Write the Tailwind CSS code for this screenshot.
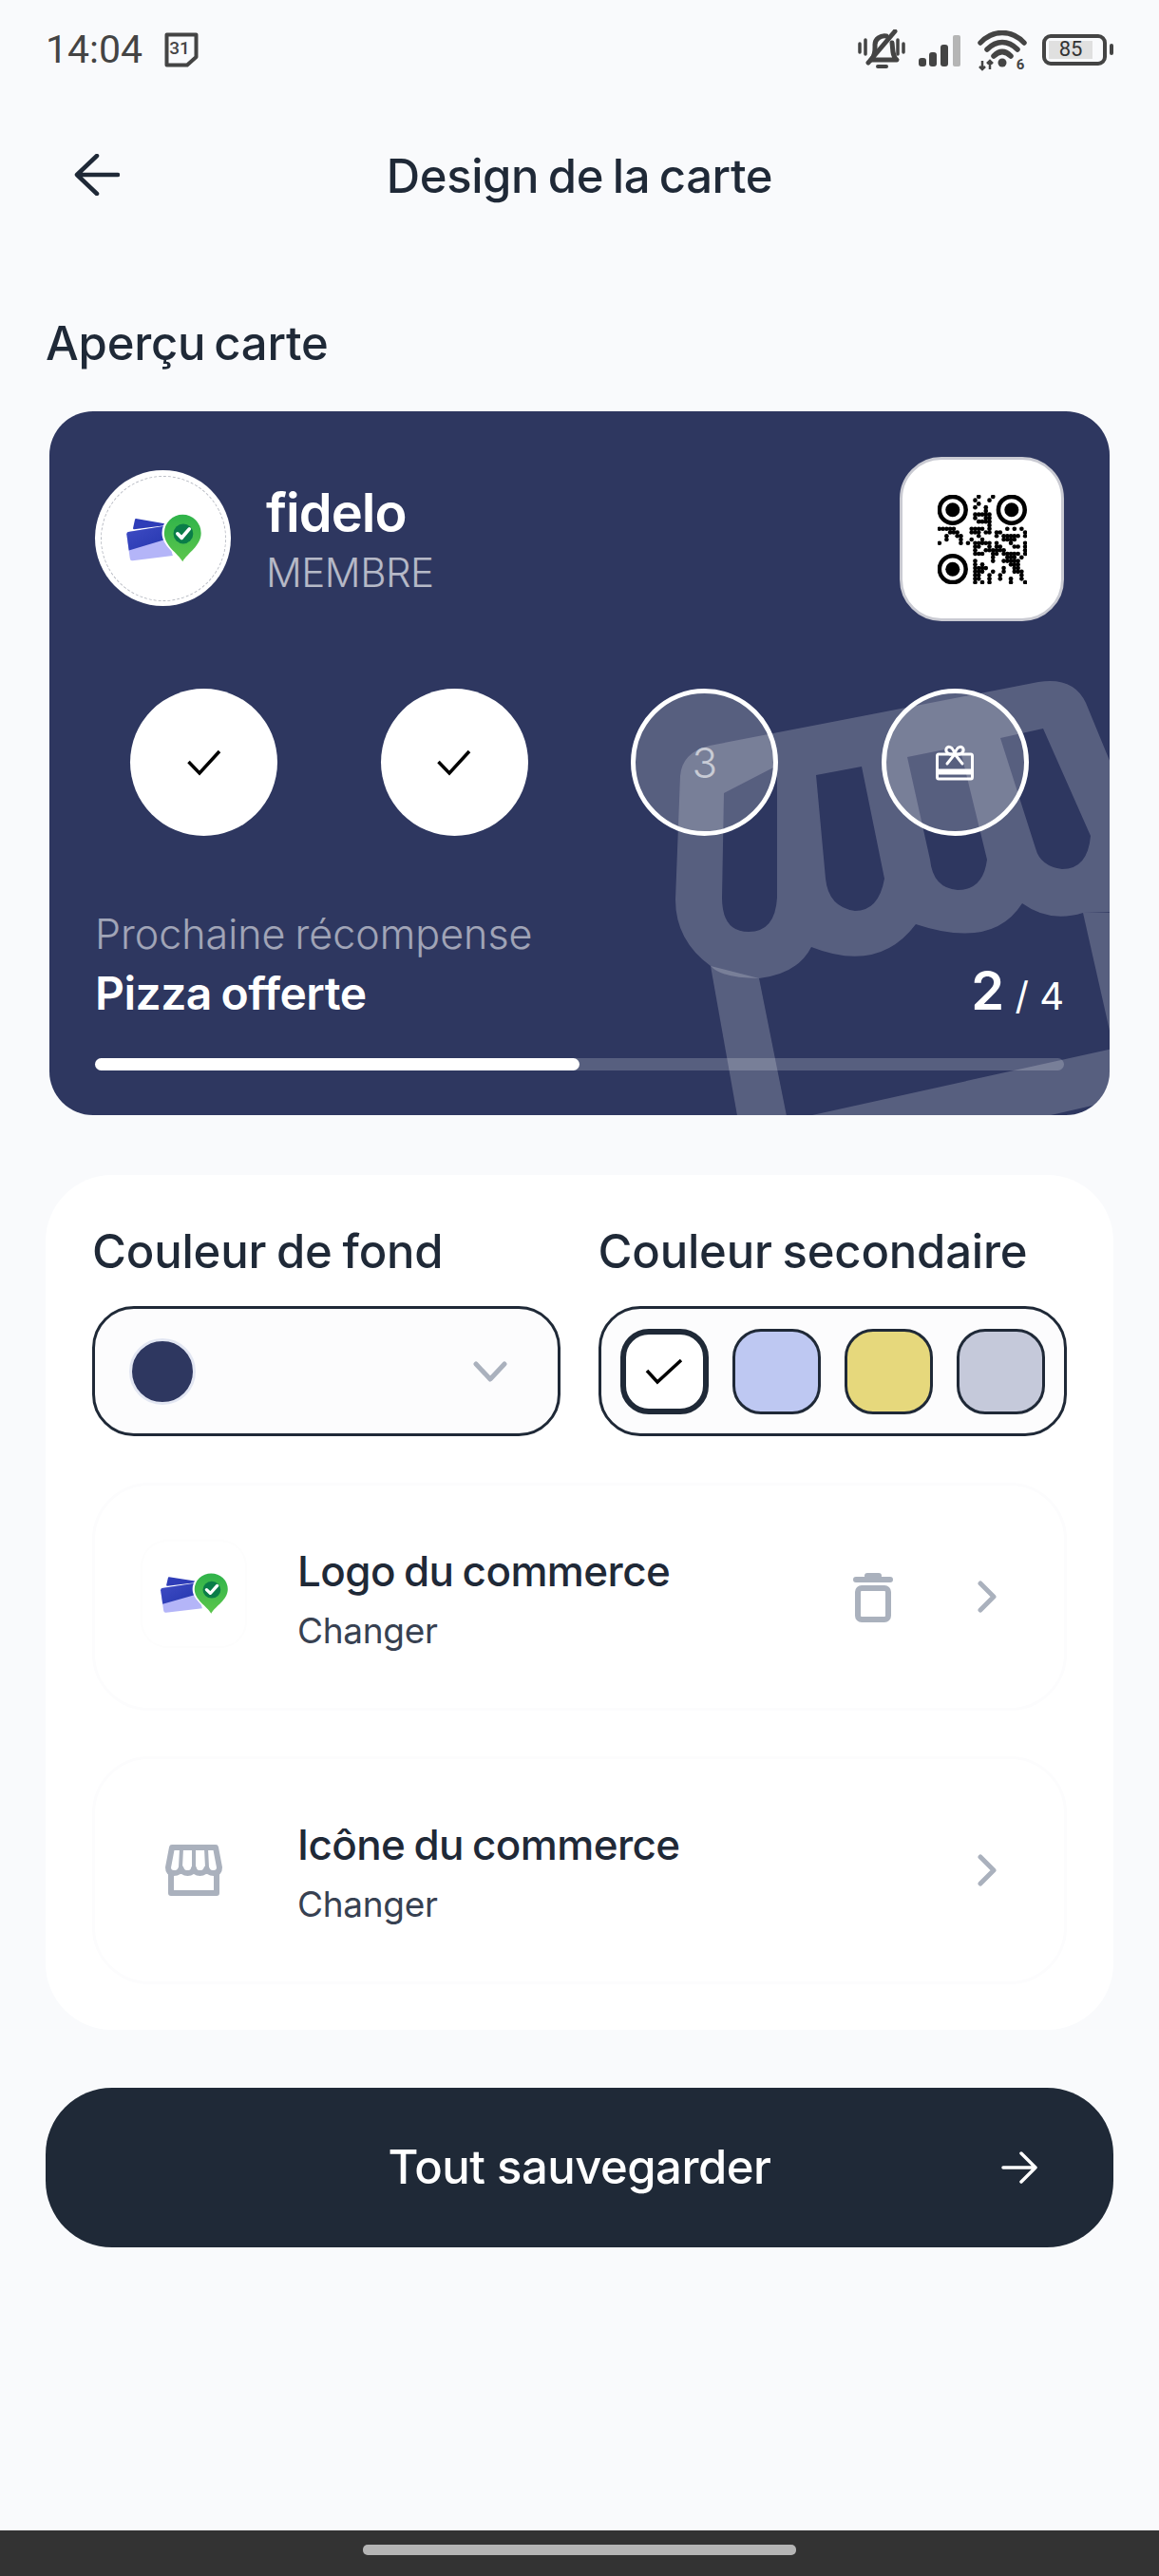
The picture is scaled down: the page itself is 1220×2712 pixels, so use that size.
<!DOCTYPE html>
<html lang="fr">
<head>
<meta charset="UTF-8">
<meta name="viewport" content="width=device-width, initial-scale=1.0">
<title>Design de la carte</title>
<script src="https://cdn.jsdelivr.net/npm/@tailwindcss/browser@4"></script>
</head>
<body class="w-[1220px] h-[2712px] bg-[#f9fafc] flex flex-col font-['Inter',sans-serif] text-[#1f2937] overflow-hidden">

<!-- shared logo -->
<svg width="0" height="0" class="absolute">
  <defs>
    <linearGradient id="pinGreen" x1="0" y1="0" x2="0" y2="1"><stop offset="0" stop-color="#2fb34a"/><stop offset="1" stop-color="#5cc64c"/></linearGradient>
    <linearGradient id="cardBlue" x1="0" y1="0" x2="1" y2="1"><stop offset="0" stop-color="#3f4cc4"/><stop offset="1" stop-color="#2436ae"/></linearGradient>
    <symbol id="logo" viewBox="120 145 245 160" preserveAspectRatio="none">
      <path d="M156 166 L246 181 L150 193 Z" fill="#2f3db8" stroke="#2f3db8" stroke-width="6" stroke-linejoin="round"/>
      <path d="M132 204 L246 186 L272 278 L146 294 Q138 295 137 286 L127 212 Q127 205 132 204 Z" fill="#b4b5f8"/>
      <path d="M132 204 L246 186 L256 226 L134 262 L127 212 Q127 205 132 204 Z" fill="url(#cardBlue)"/>
      <path d="M303 304 C285 272 238 250 238 208 A65 65 0 0 1 368 208 C368 250 321 272 303 304 Z" fill="#fff"/>
      <path d="M303 297 C288 270 245 248 245 208 A58 58 0 0 1 361 208 C361 248 318 270 303 297 Z" fill="url(#pinGreen)"/>
      <circle cx="305" cy="210" r="31" fill="#0a7d48"/>
      <path d="M287 210 L300 223 L324 195" fill="none" stroke="#fff" stroke-width="11" stroke-linecap="round" stroke-linejoin="round"/>
    </symbol>
  </defs>
</svg>

<!-- status bar -->
<div class="h-[104px] pl-[48px] pr-[48px] flex items-center justify-between text-[#444]">
  <div class="flex items-center gap-[23px]">
    <span class="font-['Roboto',sans-serif] text-[41px] leading-none">14:04</span>
    <svg width="36" height="37" viewBox="0 0 36 37">
      <path d="M2.500 2.500 H33.500 V26 L24 34.500 H2.500 Z" fill="none" stroke="#444" stroke-width="4" stroke-linejoin="round"/>
      <text x="16" y="23" text-anchor="middle" font-family="Roboto" font-size="19" font-weight="500" fill="#444">31</text>
    </svg>
  </div>
  <div class="flex items-center">
    <svg width="50" height="42" viewBox="0 0 50 42" class="mr-[14px]" fill="none" stroke="#444" stroke-linecap="round" stroke-linejoin="round">
      <path d="M2 15 V24 M8 11 V26 M42 11 V26 M48 15 V24" stroke-width="3.500"/>
      <path d="M14 32 C19 27 18 20 18 16 C18 10 24 6 30 7 M36 14 C37 21 36 28 41 32 H14" stroke-width="5"/>
      <path d="M11 35 L39 2" stroke-width="5"/>
      <path d="M21 39 H30" stroke-width="4"/>
    </svg>
    <svg width="48" height="34" viewBox="0 0 48 34" class="mr-[14px] mt-[4px]">
      <rect x="0" y="24" width="8" height="9" rx="3" fill="#444"/>
      <rect x="11" y="18" width="8" height="15" rx="3" fill="#444"/>
      <rect x="23" y="10" width="8" height="23" rx="3" fill="#444"/>
      <rect x="36" y="0" width="8" height="33" rx="2" fill="#b5b5b5"/>
    </svg>
    <svg width="52" height="44" viewBox="0 0 52 44" class="mr-[16px] mt-[3px]" fill="none" stroke="#444">
      <path d="M3 13 C16 -1 36 -1 49 13" stroke-width="5.500" stroke-linecap="round"/>
      <path d="M10 20 C20 10 32 10 42 20" stroke-width="5.500" stroke-linecap="round"/>
      <path d="M17 27 C23 21 29 21 35 27" stroke-width="5.500" stroke-linecap="round"/>
      <circle cx="26" cy="34" r="4.500" fill="#444" stroke="none"/>
      <path d="M5 32 V41 M2 38 L5 41 L8 38 M13 41 V32 M10 35 L13 32 L16 35" stroke-width="2.500"/>
      <text x="45" y="41" text-anchor="middle" font-family="Roboto" font-size="15" font-weight="700" fill="#444" stroke="none">6</text>
    </svg>
    <div class="w-[68px] h-[33px] rounded-[9px] border-[4px] border-[#444] p-[3px] flex">
      <div class="w-[46px] h-full bg-[#e0e0e0] flex items-center justify-center font-['Roboto',sans-serif] text-[22px] leading-none text-[#333]">85</div>
    </div>
    <div class="w-[4px] h-[12px] rounded-full bg-[#444] ml-[3px]"></div>
  </div>
</div>

<!-- header -->
<div class="h-[164px] px-[78px] flex items-center">
  <svg width="48" height="44" viewBox="0 0 48 44" fill="none" stroke="#1f2937" stroke-width="4.500" stroke-linecap="round" stroke-linejoin="round" class="-mt-[4px]">
    <path d="M24 2 L3 22 L24 42 M3 22 H46"/>
  </svg>
  <h1 class="flex-1 text-center text-[49px] leading-[56px] font-medium tracking-[-0.4px] [word-spacing:-3px]">Design de la carte</h1>
  <div class="w-[48px]"></div>
</div>

<div class="h-[60px] mt-[64px] mb-[41px] pl-[48px] text-[49px] leading-[60px] font-medium tracking-[-0.2px] [word-spacing:-4px]">Aperçu carte</div>

<!-- card preview -->
<div class="relative ml-[52px] w-[1116px] h-[741px] rounded-[46px] overflow-hidden bg-[#2e3760] shrink-0">
  <svg class="absolute inset-0" width="1116" height="741" viewBox="52 433 1116 741">
    <path fill="#fff" fill-opacity="0.2" fill-rule="evenodd" d="M747 785 L1093 718 Q1130 712 1143 740 L1180 830 L1180 960 L1140 961 Q1105 972 1076 951 Q1045 1000 964 973 Q925 1025 854 997 Q840 1025 799 1030 Q760 1030 748 1017 Q711 990 711 947 L716 817 Q718 792 747 785 Z
      M762 835 L818 806 L818 945 Q816 981 788 981 Q760 981 760 945 Z
      M859 816 L907 807 L931 925 Q925 959 900 959 Q872 955 869 925 Z
      M955 797 L1010 786 L1039 905 Q1035 937 1008 937 Q982 935 979 905 Z
      M1053 777 L1098 767 L1148 880 Q1145 915 1118 915 Q1095 912 1090 893 Z"/>
    <path fill="#fff" fill-opacity="0.2" d="M748 1017 L777 1180 L829 1180 L799 1030 Z"/>
    <path fill="#fff" fill-opacity="0.2" d="M828 1180 L1180 1102 L1180 1157 L1080 1180 Z"/>
    <path fill="#fff" fill-opacity="0.2" d="M1140 961 L1180 961 L1180 1085 L1168 1085 Z"/>
  </svg>

  <div class="relative px-[48px] pt-[48px]">
    <div class="flex items-start justify-between">
      <div class="flex items-start">
        <div class="mt-[14px] w-[143px] h-[143px] rounded-full bg-white flex items-center justify-center">
          <div class="w-[132px] h-[132px] rounded-full border border-dashed border-[#b9bcc4] flex items-center justify-center">
            <svg width="82" height="54"><use href="#logo"/></svg>
          </div>
        </div>
        <div class="ml-[37px] mt-[25px]">
          <div class="text-white text-[56px] leading-[68px] font-semibold tracking-[-1px]">fidelo</div>
          <div class="text-white/65 text-[42px] leading-[52px] font-light tracking-[-0.5px] mt-[3px]">MEMBRE</div>
        </div>
      </div>
      <div class="w-[173px] h-[173px] rounded-[44px] bg-white border-[3px] border-[#c9cad2] flex items-center justify-center">
        <svg id="qr" width="94" height="94" viewBox="0 0 25 25" fill="#000"></svg>
      </div>
    </div>

    <div class="flex justify-between px-[37px] mt-[71px]">
      <div class="w-[155px] h-[155px] rounded-full bg-white flex items-center justify-center">
        <svg width="36" height="28" viewBox="0 0 36 28" fill="none" stroke="#000" stroke-width="3.500"><path d="M1.500 13 L13 25 L34 2"/></svg>
      </div>
      <div class="w-[155px] h-[155px] rounded-full bg-white flex items-center justify-center">
        <svg width="36" height="28" viewBox="0 0 36 28" fill="none" stroke="#000" stroke-width="3.500"><path d="M1.500 13 L13 25 L34 2"/></svg>
      </div>
      <div class="w-[155px] h-[155px] rounded-full bg-white/20 border-[5px] border-white flex items-center justify-center text-white/60 text-[44px] font-light">3</div>
      <div class="w-[155px] h-[155px] rounded-full bg-white/20 border-[5px] border-white flex items-center justify-center">
        <svg width="40" height="38" viewBox="0 0 40 38" fill="none" stroke="#fff" stroke-width="3" stroke-linejoin="round">
          <path d="M3 10 H37 Q38.500 10 38.500 12 V34 Q38.500 36 37 36 H3 Q1.500 36 1.500 34 V12 Q1.500 10 3 10 Z"/>
          <path d="M1.500 27 H38.500 M1.500 30 H38.500"/>
          <path d="M20 10 L12 20 M20 10 L28 20" stroke-linecap="round"/>
          <path d="M20 10 C14 11 10 8 11 4.500 C12 1 18 1 20 10 C22 1 28 1 29 4.500 C30 8 26 11 20 10 Z"/>
        </svg>
      </div>
    </div>

    <div class="mt-[79px] text-white/55 text-[43px] leading-[48px] font-light [word-spacing:-2px]">Prochaine récompense</div>
    <div class="mt-[6px] flex items-baseline justify-between h-[63px]">
      <span class="text-white text-[48px] leading-[60px] font-semibold tracking-[-0.5px] [word-spacing:-2px]">Pizza offerte</span>
      <span class="text-white text-[40px] leading-[60px] -mb-[3px]"><span class="text-[56px] font-semibold">2</span> / 4</span>
    </div>
    <div class="mt-[38px] h-[13px] rounded-full bg-white/20">
      <div class="w-1/2 h-full rounded-full bg-white"></div>
    </div>
  </div>
</div>

<!-- settings panel -->
<div class="ml-[48px] mt-[63px] w-[1124px] h-[900px] rounded-[70px] bg-white px-[49px] pt-[51px] shrink-0">
  <div class="flex gap-[40px]">
    <div class="w-[493px]">
      <div class="text-[49px] leading-[60px] font-medium tracking-[-0.2px] [word-spacing:-2px]">Couleur de fond</div>
      <div class="mt-[27px] h-[137px] rounded-[44px] border-[3px] border-[#1f2937] bg-[#fcfcfd] flex items-center justify-between pl-[36px] pr-[53px]">
        <div class="w-[70px] h-[70px] rounded-full bg-[#2e3760] border-[3px] border-[#e2e6f2]"></div>
        <svg width="36" height="22" viewBox="0 0 36 22" fill="none" stroke="#aab1bd" stroke-width="5" stroke-linecap="round" stroke-linejoin="round"><path d="M3 3 L18 19 L33 3"/></svg>
      </div>
    </div>
    <div class="w-[494px]">
      <div class="text-[49px] leading-[60px] font-medium tracking-[-0.2px] [word-spacing:-2px]">Couleur secondaire</div>
      <div class="mt-[27px] h-[137px] rounded-[44px] border-[3px] border-[#1f2937] bg-[#fcfcfd] flex items-center justify-between px-[20px]">
        <div class="w-[93px] h-[90px] rounded-[30px] border-[6px] border-[#1f2937] bg-white flex items-center justify-center">
          <svg width="40" height="28" viewBox="0 0 40 28" fill="none" stroke="#000" stroke-width="3.500"><path d="M2 13 L13 25 L38 2"/></svg>
        </div>
        <div class="w-[93px] h-[90px] rounded-[30px] border-[3px] border-[#1f2937] bg-[#bec8f2]"></div>
        <div class="w-[93px] h-[90px] rounded-[30px] border-[3px] border-[#1f2937] bg-[#e6d87c]"></div>
        <div class="w-[93px] h-[90px] rounded-[30px] border-[3px] border-[#1f2937] bg-[#c5c9da]"></div>
      </div>
    </div>
  </div>

  <div class="mt-[49px] h-[240px] rounded-[60px] border-[3px] border-[#fcfcfd] bg-white flex items-center pl-[48px] pr-[71px]">
    <div class="w-[112px] h-[114px] rounded-[28px] bg-white border-[2px] border-[#fdfdfd] flex items-center justify-center -mt-[6px]">
      <svg width="74" height="46"><use href="#logo"/></svg>
    </div>
    <div class="ml-[53px] pt-[6px]">
      <div class="text-[44px] leading-[54px] font-medium tracking-[-0.6px] [word-spacing:-2px]">Logo du commerce</div>
      <div class="mt-[12px] text-[37px] leading-[48px] text-[#374151] tracking-[-0.3px]">Changer</div>
    </div>
    <div class="ml-auto flex items-center gap-[89px]">
      <svg width="42" height="54" viewBox="0 0 42 54" fill="none" stroke="#aab1bd" stroke-width="6" stroke-linecap="round" stroke-linejoin="round">
        <path d="M3 9 H39 M15 5 H27"/>
        <rect x="5" y="18" width="32" height="33" rx="4"/>
      </svg>
      <svg width="20" height="34" viewBox="0 0 20 34" fill="none" stroke="#aab1bd" stroke-width="5" stroke-linecap="round" stroke-linejoin="round"><path d="M3 3 L17 17 L3 31"/></svg>
    </div>
  </div>

  <div class="mt-[48px] h-[240px] rounded-[60px] border-[3px] border-[#fcfcfd] bg-white flex items-center pl-[48px] pr-[71px]">
    <div class="w-[112px] h-[114px] flex items-center justify-center">
      <svg width="60" height="54" viewBox="0 0 60 54" fill="none" stroke="#aab1bd" stroke-width="6" stroke-linecap="round" stroke-linejoin="round">
        <path d="M7 3 H53 L57 24 Q57 30 51 30 Q45 30 43.500 25 Q42 30 36.500 30 Q31 30 30 25 Q29 30 23.500 30 Q18 30 16.500 25 Q15 30 9 30 Q3 30 3 24 Z"/>
        <path d="M17 4 L16 24 M30 4 V24 M43 4 L44 24" stroke-width="4"/>
        <path d="M6 30 V51 H54 V30"/>
      </svg>
    </div>
    <div class="ml-[53px] pt-[6px]">
      <div class="text-[44px] leading-[54px] font-medium tracking-[-0.6px] [word-spacing:-2px]">Icône du commerce</div>
      <div class="mt-[12px] text-[37px] leading-[48px] text-[#374151] tracking-[-0.3px]">Changer</div>
    </div>
    <svg width="20" height="34" viewBox="0 0 20 34" fill="none" stroke="#aab1bd" stroke-width="5" stroke-linecap="round" stroke-linejoin="round" class="ml-auto"><path d="M3 3 L17 17 L3 31"/></svg>
  </div>
</div>

<!-- save -->
<button class="mx-[48px] mt-[61px] h-[168px] rounded-[70px] bg-[#1f2937] text-white flex items-center px-[80px] shrink-0">
  <span class="w-[38px]"></span>
  <span class="flex-1 text-center text-[49px] font-medium tracking-[-0.5px]">Tout sauvegarder</span>
  <svg width="38" height="34" viewBox="0 0 38 34" fill="none" stroke="#fff" stroke-width="3.500" stroke-linecap="round" stroke-linejoin="round"><path d="M2 17 H36 M21 2 L36 17 L21 32"/></svg>
</button>

<!-- android nav -->
<div class="mt-auto h-[48px] bg-[#333] flex items-center justify-center shrink-0">
  <div class="w-[456px] h-[11px] rounded-[5px] bg-[#b5b5b5] -mt-[7px]"></div>
</div>

<script>
  // qr modules, finder patterns are drawn apart
  const rows = [
    "...........#...#.........",
    "..........#...#..........",
    "...........#.............",
    "..........#..#...........",
    ".............#...........",
    "..........#####..........",
    "..........#..##..........",
    "...........####..........",
    "..............#..........",
    "#####....####.#....#.#.#.",
    "...###...###.##.##......#",
    "..#..##....#....#.#####.#",
    "..#...#..#..#.....####...",
    "#.....#.#.#####.#...#...#",
    "..........##..#.##...##.#",
    "..........#..######.....#",
    "..........###..##.#####.#",
    "...............#...###.#.",
    "..........#....#..#####..",
    "..........#.#.......###..",
    "..........####....#..##..",
    "..........###..#..#..###.",
    "..........##..#..#.....#.",
    "..........##..#..#..#..#.",
    "..........#.#.#.....#...#"
  ];
  const svg = document.getElementById("qr");
  let html = "";
  rows.forEach((row, r) => {
    [...row].forEach((cell, c) => {
      if (cell === "#") html += `<circle cx="${c + 0.5}" cy="${r + 0.5}" r="0.62"/>`;
    });
  });
  [[4.2, 4.2], [20.7, 4.2], [4.2, 20.8]].forEach(([x, y]) => {
    html += `<circle cx="${x}" cy="${y}" r="3.7" fill="none" stroke="#000" stroke-width="1.2"/><circle cx="${x}" cy="${y}" r="2"/>`;
  });
  svg.innerHTML = html;
</script>
</body>
</html>
